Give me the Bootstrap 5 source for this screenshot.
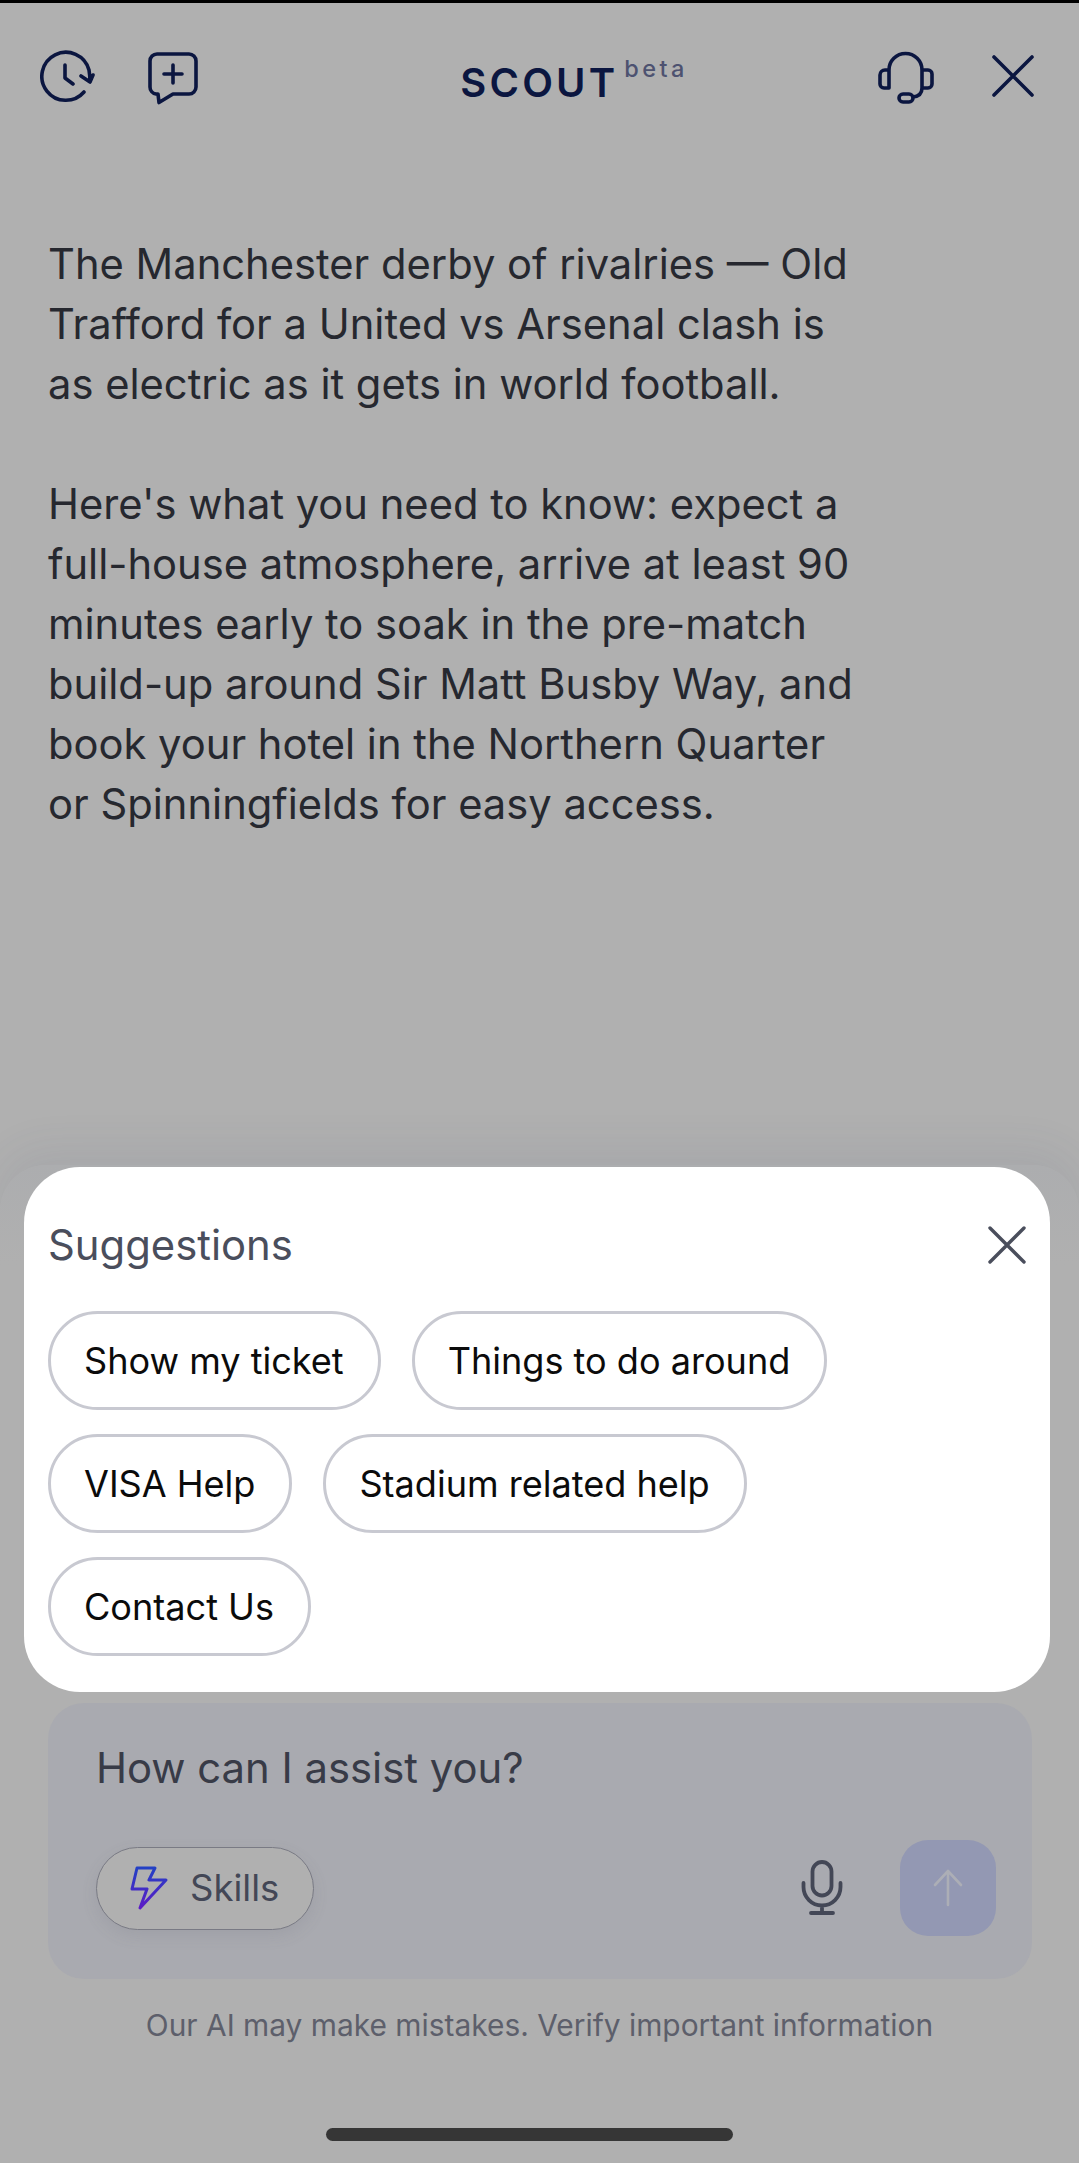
<!DOCTYPE html>
<html lang="en">
<head>
    <meta charset="UTF-8">
    <meta name="viewport" content="width=device-width, initial-scale=1.0">
    <link rel="stylesheet" href="https://cdn.jsdelivr.net/npm/bootstrap@5.3.3/dist/css/bootstrap.min.css">
    <title>Scout</title>
    <style>
        body {
            background-color: #b0b0b0;
            font-family: Inter, "Liberation Sans", sans-serif;
            overflow: hidden;
        }
        .screen {
            height: 2163px;
            border-top: 3px solid #000;
        }
        .top-bar {
            padding: 47px 44px 0 40px;
            height: 111px;
        }
        .icon-pair { gap: 51px; }
        .icon-pair-right { gap: 56px; }
        .icon-stroke {
            fill: none;
            stroke: #0b1640;
            stroke-width: 3.6;
            stroke-linecap: round;
            stroke-linejoin: round;
        }
        .brand-box {
            margin: 8px 0 0 72px;
        }
        .brand-name {
            font-size: 40px;
            font-weight: 600;
            letter-spacing: 3.2px;
            line-height: 50px;
            color: #0b1640;
        }
        .brand-tag {
            font-size: 23.5px;
            font-weight: 500;
            letter-spacing: 3.4px;
            color: #4d5270;
            line-height: 22px;
            margin: 0 0 0 6px;
        }
        .answer {
            padding: 120px 48px 0;
            font-size: 41.7px;
            line-height: 60px;
            color: #26282f;
            white-space: pre-line;
        }
        .tray {
            background: linear-gradient(#acadaf, #b0b0b0 100px);
            border-radius: 46px 46px 0 0;
            margin-top: auto;
            height: 998px;
            box-shadow: 0 -14px 44px rgba(70, 78, 110, .09);
        }
        .sheet {
            background: #fff;
            border-radius: 56px;
            margin: 2px 29px 0 24px;
            padding: 56px 24px 0;
            height: 525px;
        }
        .sheet-title {
            font-size: 41.8px;
            line-height: 44px;
            color: #4a4e5c;
        }
        .chips {
            gap: 24px 31px;
            margin-top: 44px;
        }
        .chip {
            height: 99px;
            padding: 2px 34px 0 33px;
            border: 3px solid #c8c9d1;
            border-radius: 50px;
            font-size: 36.1px;
            color: #0b0b0b;
            background: #fff;
        }
        .composer {
            background: #a9aab0;
            border-radius: 36px;
            margin: 11px 47px 0 48px;
            height: 276px;
            padding: 37px 36px 0 48px;
        }
        .prompt-text {
            font-size: 41.8px;
            line-height: 56px;
            color: #383b47;
        }
        .skills-btn {
            height: 83px;
            width: 218px;
            border: 1.5px solid #797a84;
            border-radius: 42px;
            background: #b0b0b0;
            font-size: 36.5px;
            color: #434756;
            box-shadow: 0 6px 16px rgba(90, 90, 110, .12);
            gap: 22px;
            padding-left: 33px;
        }
        .send-btn {
            width: 96px;
            height: 96px;
            background: #9398b3;
            border-radius: 28px;
        }
        .mic-gap { margin-right: 57px; }
        .tools-row { margin-top: 44px; }
        .disclaimer {
            font-size: 29.9px;
            line-height: 40px;
            color: #5d5f6b;
            margin-top: 26px;
        }
        .home-bar {
            width: 407px;
            height: 13px;
            background: #363636;
            border-radius: 7px;
            margin: 83px 0 0 326px;
        }
    </style>
</head>
<body>
<div class="screen d-flex flex-column">
    <header class="top-bar d-flex align-items-start justify-content-between">
        <div class="d-flex icon-pair">
            <svg width="56" height="56" viewBox="0 0 56 56"><path class="icon-stroke" d="M44 42A24 24 0 1 1 49 20Q50 26 50 32M41 26l9 6 3-7M25 15V28l8 6"/></svg>
            <svg width="52" height="56" viewBox="0 0 52 56"><path class="icon-stroke" d="M10 4H42a7 7 0 0 1 7 7V37a7 7 0 0 1-7 7H26l-14 8.500-1-8.500H9a7 7 0 0 1-6-7V11a7 7 0 0 1 7-7ZM26 15V33M17 24H35"/></svg>
        </div>
        <div class="d-flex align-items-start brand-box">
            <span class="brand-name">SCOUT</span><span class="brand-tag">beta</span>
        </div>
        <div class="d-flex icon-pair-right">
            <svg width="58" height="60" viewBox="0 0 58 60"><path class="icon-stroke" d="M12 20a16.500 16.500 0 0 1 33 0M12 20H8a5 5 0 0 0-5 5V34a4 4 0 0 0 4 4H12ZM45 20h6a4 4 0 0 1 4 4V34a4 4 0 0 1-4 4H45ZM45 38Q45 46 36 47M26 44H32a4 4 0 0 1 0 8H26a4 4 0 0 1 0-8Z"/></svg>
            <svg width="44" height="44" viewBox="0 0 44 44" class="mt-1"><path class="icon-stroke" d="M3 3L41 41M41 3L3 41"/></svg>
        </div>
    </header>

    <div class="answer">The Manchester derby of rivalries — Old
Trafford for a United vs Arsenal clash is
as electric as it gets in world football.

Here's what you need to know: expect a
full-house atmosphere, arrive at least 90
minutes early to soak in the pre-match
build-up around Sir Matt Busby Way, and
book your hotel in the Northern Quarter
or Spinningfields for easy access.</div>

    <div class="tray">
        <section class="sheet">
            <div class="d-flex justify-content-between align-items-center">
                <div class="sheet-title">Suggestions</div>
                <svg width="38" height="38" viewBox="0 0 38 38"><path d="M2 2L36 36M36 2L2 36" fill="none" stroke="#4a4e5c" stroke-width="3.400" stroke-linecap="round"/></svg>
            </div>
            <div class="chips d-flex flex-wrap">
                <button type="button" class="chip d-flex align-items-center">Show my ticket</button>
                <button type="button" class="chip d-flex align-items-center">Things to do around</button>
                <button type="button" class="chip d-flex align-items-center">VISA Help</button>
                <button type="button" class="chip d-flex align-items-center">Stadium related help</button>
                <button type="button" class="chip d-flex align-items-center">Contact Us</button>
            </div>
        </section>

        <section class="composer">
            <div class="prompt-text">How can I assist you?</div>
            <div class="tools-row d-flex align-items-center">
                <button type="button" class="skills-btn d-flex align-items-center">
                    <svg width="38" height="44" viewBox="0 0 38 44">
                        <defs><linearGradient id="boltGrad" x1="0" y1="0" x2="0" y2="1"><stop offset="0" stop-color="#2340c4"/><stop offset="1" stop-color="#5c1bc6"/></linearGradient></defs>
                        <path d="M7 2H25L19 14H36L10 42L17 23H2Z" fill="none" stroke="url(#boltGrad)" stroke-width="3" stroke-linejoin="round"/>
                    </svg>
                    <span>Skills</span>
                </button>
                <svg class="ms-auto mic-gap" width="42" height="56" viewBox="0 0 42 56"><path d="M21 2a9.500 9.500 0 0 1 9.500 9.500V26a9.500 9.500 0 0 1-19 0V11.500A9.500 9.500 0 0 1 21 2ZM2.500 23V27a18.500 18.500 0 0 0 37 0V23M21 45.500V53M10 53H32" fill="none" stroke="#434756" stroke-width="3.800" stroke-linecap="round"/></svg>
                <button type="button" class="send-btn border-0 d-flex align-items-center justify-content-center p-0">
                    <svg width="32" height="38" viewBox="0 0 32 38"><path d="M16 2V36M3 16L16 2L29 16" fill="none" stroke="#acaeb6" stroke-width="2.600" stroke-linecap="round" stroke-linejoin="round"/></svg>
                </button>
            </div>
        </section>

        <div class="disclaimer text-center">Our AI may make mistakes. Verify important information</div>
        <div class="home-bar"></div>
    </div>
</div>
</body>
</html>
